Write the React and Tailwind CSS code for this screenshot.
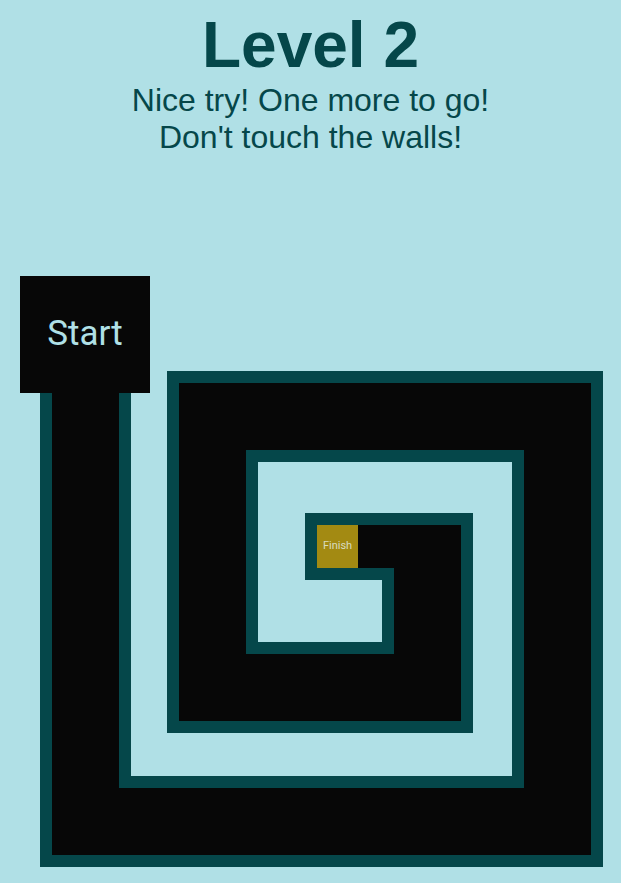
const walls = [
  { x: 40, y: 105, w: 91, h: 486 },
  { x: 40, y: 500, w: 563, h: 91 },
  { x: 512, y: 95, w: 91, h: 496 },
  { x: 167, y: 95, w: 436, h: 91 },
  { x: 167, y: 95, w: 91, h: 362 },
  { x: 167, y: 366, w: 306, h: 91 },
  { x: 382, y: 237, w: 91, h: 220 },
  { x: 305, y: 237, w: 168, h: 67 },
];

const paths = [
  { x: 52, y: 117, w: 67, h: 462 },
  { x: 52, y: 512, w: 539, h: 67 },
  { x: 524, y: 107, w: 67, h: 472 },
  { x: 179, y: 107, w: 412, h: 67 },
  { x: 179, y: 107, w: 67, h: 338 },
  { x: 179, y: 378, w: 282, h: 67 },
  { x: 394, y: 249, w: 67, h: 196 },
  { x: 317, y: 249, w: 144, h: 43 },
];

function Block({ r, className }) {
  return (
    <div
      className={`absolute ${className}`}
      style={{ left: r.x, top: r.y, width: r.w, height: r.h }}
    />
  );
}

export default function App() {
  return (
    <div className="min-h-[883px] w-full bg-[#b0e0e6] pt-2 font-['Liberation_Sans',Arial,sans-serif] text-[#05474a]">
      {/* Header */}
      <div className="text-center">
        <h1 className="text-[64px] font-bold leading-[74px]">Level 2</h1>
        <p className="text-[32px] leading-[37px]">
          Nice try! One more to go!
          <br />
          Don't touch the walls!
        </p>
      </div>

      {/* Maze */}
      <div className="relative mt-[120px] h-[591px] w-full">
        {walls.map((r, i) => (
          <Block key={`w${i}`} r={r} className="bg-[#05474a]" />
        ))}
        {paths.map((r, i) => (
          <Block key={`p${i}`} r={r} className="bg-[#070707]" />
        ))}
        <div className="absolute left-[20px] top-0 flex h-[117px] w-[130px] items-center justify-center bg-[#070707] font-['Roboto',sans-serif] text-[35px] text-[#b0e0e6]">
          Start
        </div>
        <div className="absolute left-[317px] top-[249px] flex h-[43px] w-[41px] items-center justify-center bg-[#a38a12] font-['Roboto',sans-serif] text-[11px] text-[#d8dcc0]">
          Finish
        </div>
      </div>
    </div>
  );
}
